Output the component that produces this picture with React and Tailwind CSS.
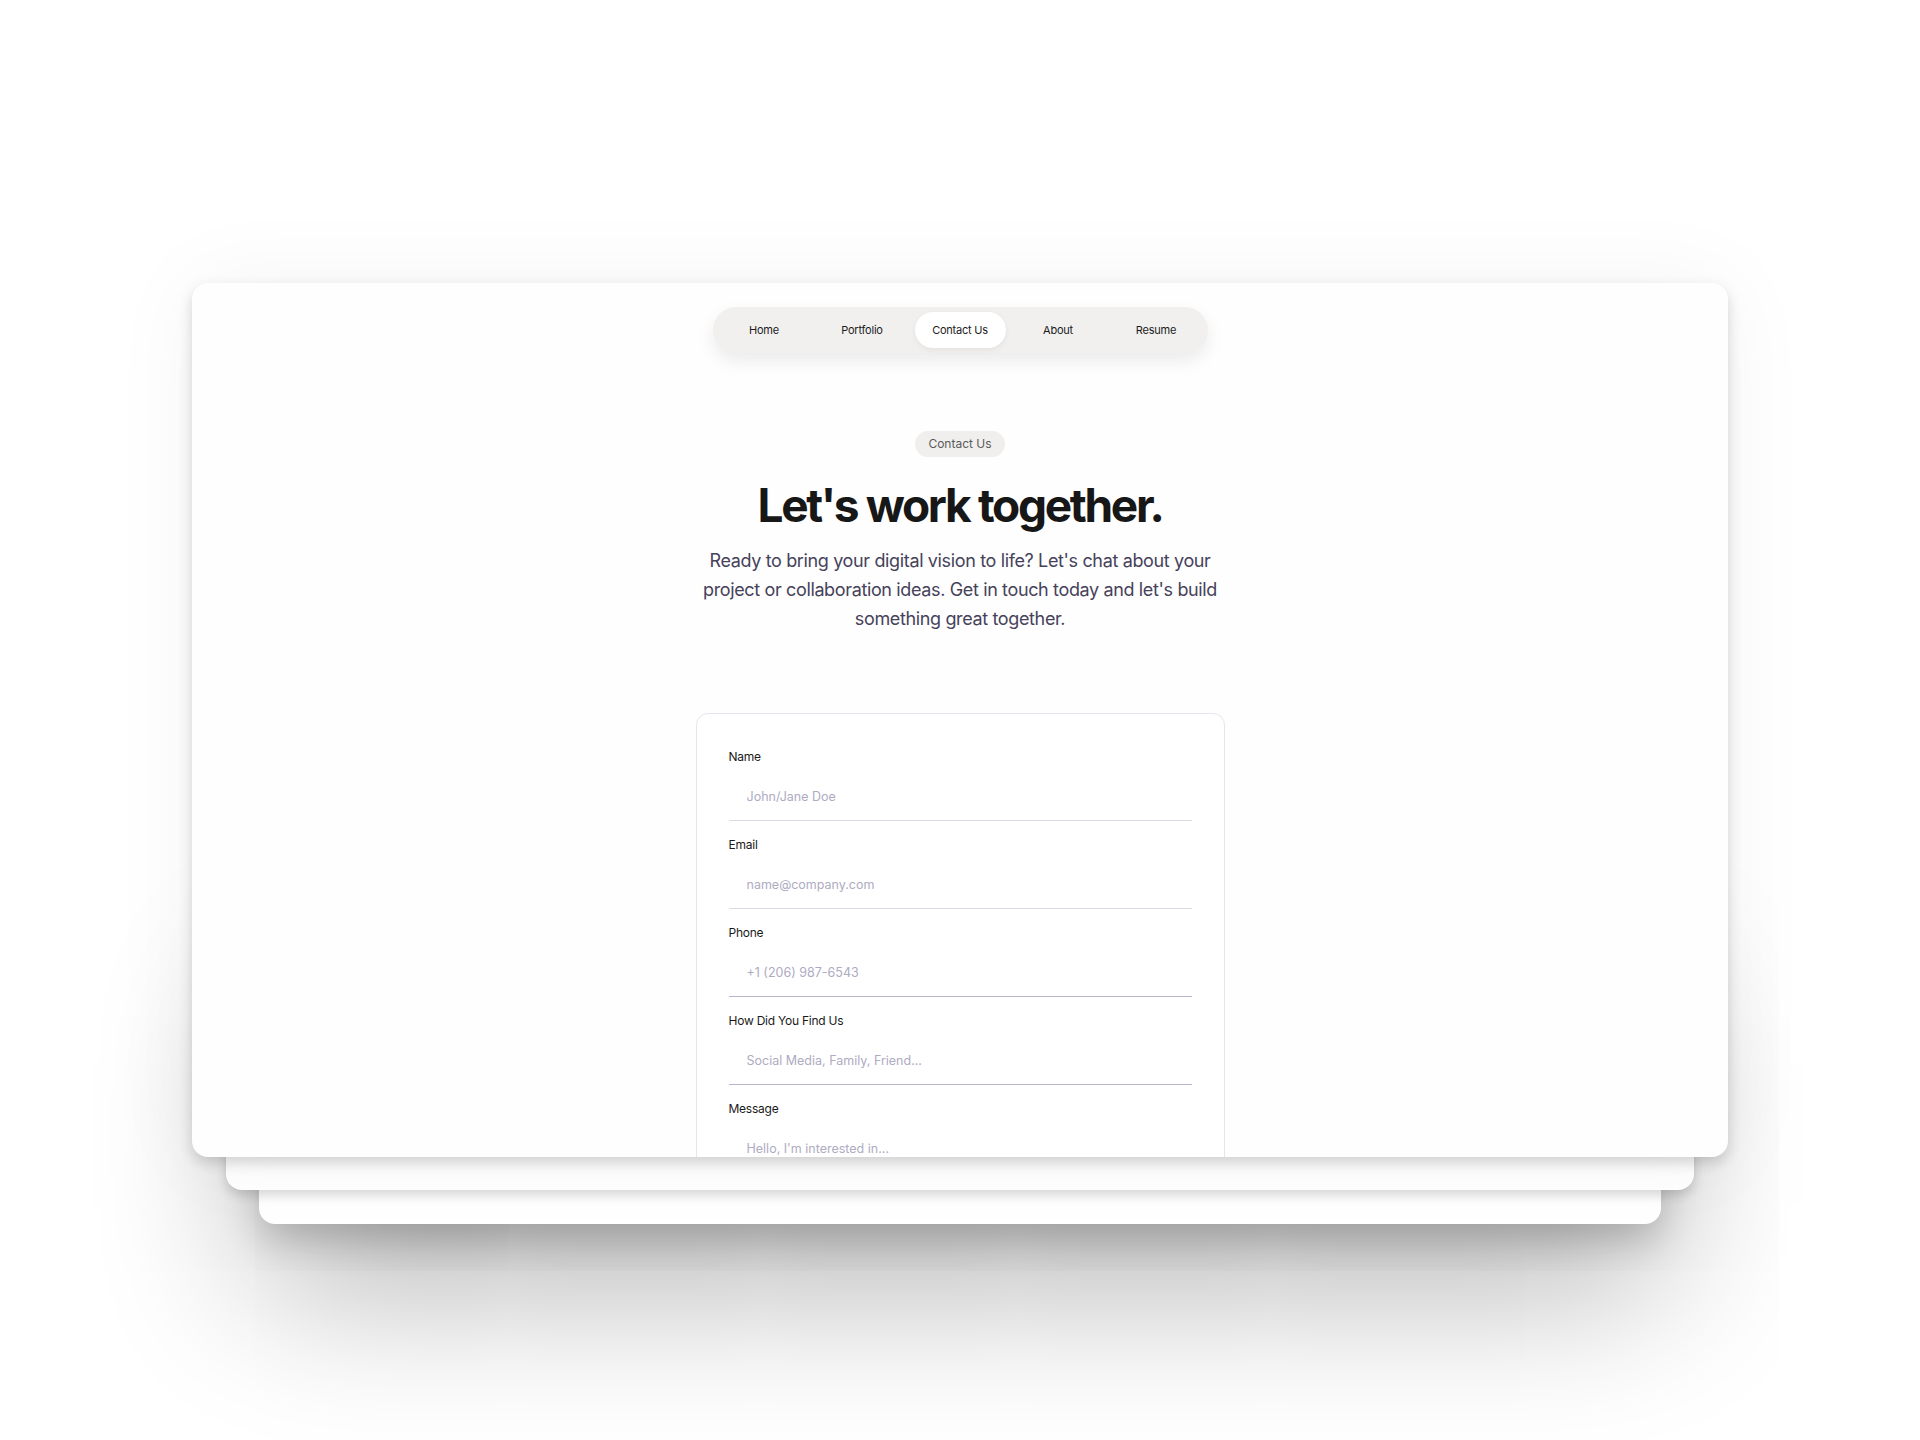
import { useState } from 'react'

const NAV_ITEMS = ['Home', 'Portfolio', 'Contact Us', 'About', 'Resume']

const FIELDS = [
  { label: 'Name', placeholder: 'John/Jane Doe', line: 'border-[#dcdbe3]' },
  { label: 'Email', placeholder: 'name@company.com', line: 'border-[#dcdbe3]' },
  { label: 'Phone', placeholder: '+1 (206) 987-6543', line: 'border-[#b9b6c9]' },
  { label: 'How Did You Find Us', placeholder: 'Social Media, Family, Friend...', line: 'border-[#b9b6c9]' },
  { label: 'Message', placeholder: "Hello, I'm interested in...", line: 'border-[#dcdbe3]' },
]

function NavPill() {
  const [active, setActive] = useState('Contact Us')

  return (
    <nav className="flex items-center gap-[7px] rounded-full bg-[#f1f0ef] px-[6px] py-[5px] shadow-[0_8px_18px_rgba(0,0,0,0.08)]">
      {NAV_ITEMS.map((item) => (
        <button
          key={item}
          type="button"
          onClick={() => setActive(item)}
          className={`flex h-[36px] w-[91px] items-center justify-center rounded-full text-[11px] tracking-[-0.02em] text-[#1c1c1c] ${
            active === item ? 'bg-white shadow-[0_2px_6px_rgba(0,0,0,0.06)]' : ''
          }`}
        >
          {item}
        </button>
      ))}
    </nav>
  )
}

function Field({ label, placeholder, line }) {
  return (
    <div className="flex flex-col">
      <label className="text-[12px] leading-[16px] tracking-[-0.02em] text-[#1a1a1a]">{label}</label>
      <input
        type="text"
        placeholder={placeholder}
        className={`mt-[8px] h-[48px] w-full border-b bg-transparent px-[18px] text-[12.5px] text-[#1a1a1a] outline-none placeholder:text-[#aeabc2] ${line}`}
      />
    </div>
  )
}

export default function App() {
  return (
    <div className="min-h-[1440px] w-full overflow-hidden bg-white pt-[283px] font-['Inter',sans-serif]">
      <div className="flex flex-col items-center">
        {/* front sheet */}
        <div className="relative z-30 h-[874px] w-[1536px] overflow-hidden rounded-[16px] bg-[#fefefe] shadow-[0_6px_14px_rgba(0,0,0,0.16),0_0_90px_rgba(0,0,0,0.05)]">
          <div className="flex flex-col items-center pt-[24px]">
            <NavPill />

            <span className="mt-[78px] flex h-[26px] items-center rounded-full bg-[#f0efee] px-[13px] text-[12px] text-[#5a5a5a]">
              Contact Us
            </span>

            <h1 className="mt-[25px] text-[46px] font-bold leading-none tracking-[-0.05em] text-[#171717]">
              Let's work together.
            </h1>

            <p className="mt-[18px] max-w-[520px] text-center text-[18px] leading-[29px] tracking-[-0.02em] text-[#46425a]">
              Ready to bring your digital vision to life? Let's chat about your project or collaboration ideas. Get in
              touch today and let's build something great together.
            </p>

            <form className="mt-[80px] flex w-[529px] flex-col gap-[16px] rounded-[12px] border border-[#e6e5ec] bg-white px-[32px] pt-[35px] pb-[32px]">
              {FIELDS.map((field) => (
                <Field key={field.label} {...field} />
              ))}
            </form>
          </div>
        </div>

        {/* sheets behind */}
        <div className="relative z-20 -mt-[267px] h-[300px] w-[1468px] rounded-[16px] bg-white shadow-[0_5px_12px_rgba(0,0,0,0.16)]" />
        <div className="relative z-10 -mt-[266px] h-[300px] w-[1402px] rounded-[16px] bg-white shadow-[0_16px_36px_rgba(0,0,0,0.18),0_60px_160px_rgba(0,0,0,0.32)]" />
      </div>
    </div>
  )
}
